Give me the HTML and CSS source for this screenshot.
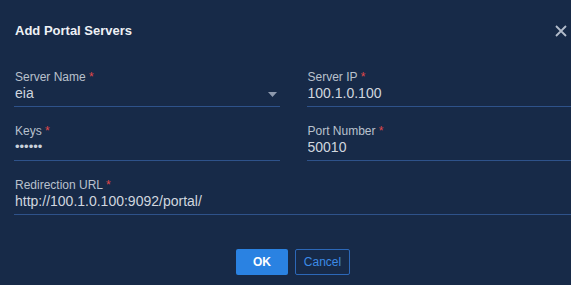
FILE: index.html
```html
<!DOCTYPE html>
<html lang="en">
<head>
    <meta charset="UTF-8">
    <meta name="viewport" content="width=device-width, initial-scale=1.0">
    <link rel="stylesheet" href="styles.css">
    <title>Add Portal Servers</title>
</head>
<body>
    <div class="dialog">
        <div class="dialogHeader">
            <span class="dialogTitle">Add Portal Servers</span>
            <button class="closeBtn" aria-label="Close">
                <svg width="12" height="12" viewBox="0 0 12 12">
                    <path d="M1 1 L11 11 M11 1 L1 11" stroke="#b3bccb" stroke-width="1.8" fill="none"/>
                </svg>
            </button>
        </div>

        <form class="serverForm">
            <div class="field">
                <label>Server Name <span class="req">*</span></label>
                <div class="control">
                    <input value="eia" readonly>
                    <svg class="caret" width="9" height="5" viewBox="0 0 9 5">
                        <path d="M0 0 L9 0 L4.5 5 Z" fill="#8d99ad"/>
                    </svg>
                </div>
            </div>
            <div class="field">
                <label>Server IP <span class="req">*</span></label>
                <div class="control">
                    <input value="100.1.0.100">
                </div>
            </div>
            <div class="field">
                <label>Keys <span class="req">*</span></label>
                <div class="control">
                    <input type="password" class="secret" value="123456">
                </div>
            </div>
            <div class="field">
                <label>Port Number <span class="req">*</span></label>
                <div class="control">
                    <input value="50010">
                </div>
            </div>
            <div class="field wide">
                <label>Redirection URL <span class="req">*</span></label>
                <div class="control">
                    <input value="http://100.1.0.100:9092/portal/">
                </div>
            </div>
        </form>

        <div class="dialogFooter">
            <button class="okBtn">OK</button>
            <button class="cancelBtn">Cancel</button>
        </div>
    </div>
</body>
</html>
```

FILE: styles.css
```css
body{
    margin: 0;
    padding: 0;
    background-color: #172a48;
    overflow: hidden;
    font-family: "Liberation Sans", Arial, Helvetica, sans-serif;
}

.dialog{
    width: 586px;
    height: 285px;
    background-color: #172a48;
}

.dialogHeader{
    display: flex;
    align-items: center;
    justify-content: space-between;
    padding: 23px 19px 0 15px;
    height: 16px;
}

.dialogTitle{
    font-size: 13px;
    line-height: 16px;
    font-weight: bold;
    color: #eef1f5;
}

.closeBtn{
    width: 12px;
    height: 12px;
    padding: 0;
    border: none;
    background: none;
    cursor: pointer;
    display: flex;
}

.serverForm{
    display: grid;
    grid-template-columns: 1fr 1fr;
    column-gap: 27px;
    row-gap: 17px;
    padding: 31px 14px 0 14px;
    margin: 0;
}

.field.wide{
    grid-column: 1 / 3;
}

.field label{
    display: block;
    padding-left: 1px;
    font-size: 12px;
    line-height: 14px;
    color: #b9c1cd;
}

.req{
    color: #e04848;
}

.control{
    display: flex;
    align-items: center;
    height: 22px;
    border-bottom: 1px solid #2e528a;
}

.control input{
    flex: 1;
    min-width: 0;
    height: 18px;
    margin: 0 0 4px 0;
    padding: 0 0 0 1px;
    border: none;
    outline: none;
    background: transparent;
    font-family: "Liberation Sans", Arial, Helvetica, sans-serif;
    font-size: 14px;
    line-height: 18px;
    color: #d0d6df;
}

.control input.secret{
    font-size: 13px;
    color: #c9d0da;
}

.caret{
    margin: 0 3px 2px 0;
}

.dialogFooter{
    display: flex;
    justify-content: center;
    gap: 7px;
    padding-top: 34px;
}

.dialogFooter button{
    height: 26px;
    border-radius: 2px;
    font-family: "Liberation Sans", Arial, Helvetica, sans-serif;
    font-size: 12px;
    cursor: pointer;
}

.okBtn{
    width: 52px;
    border: none;
    background-color: #2a82e2;
    color: #ffffff;
    font-weight: bold;
}

.cancelBtn{
    width: 55px;
    border: 1px solid #2c68b8;
    background-color: transparent;
    color: #3c8ae6;
}
```
